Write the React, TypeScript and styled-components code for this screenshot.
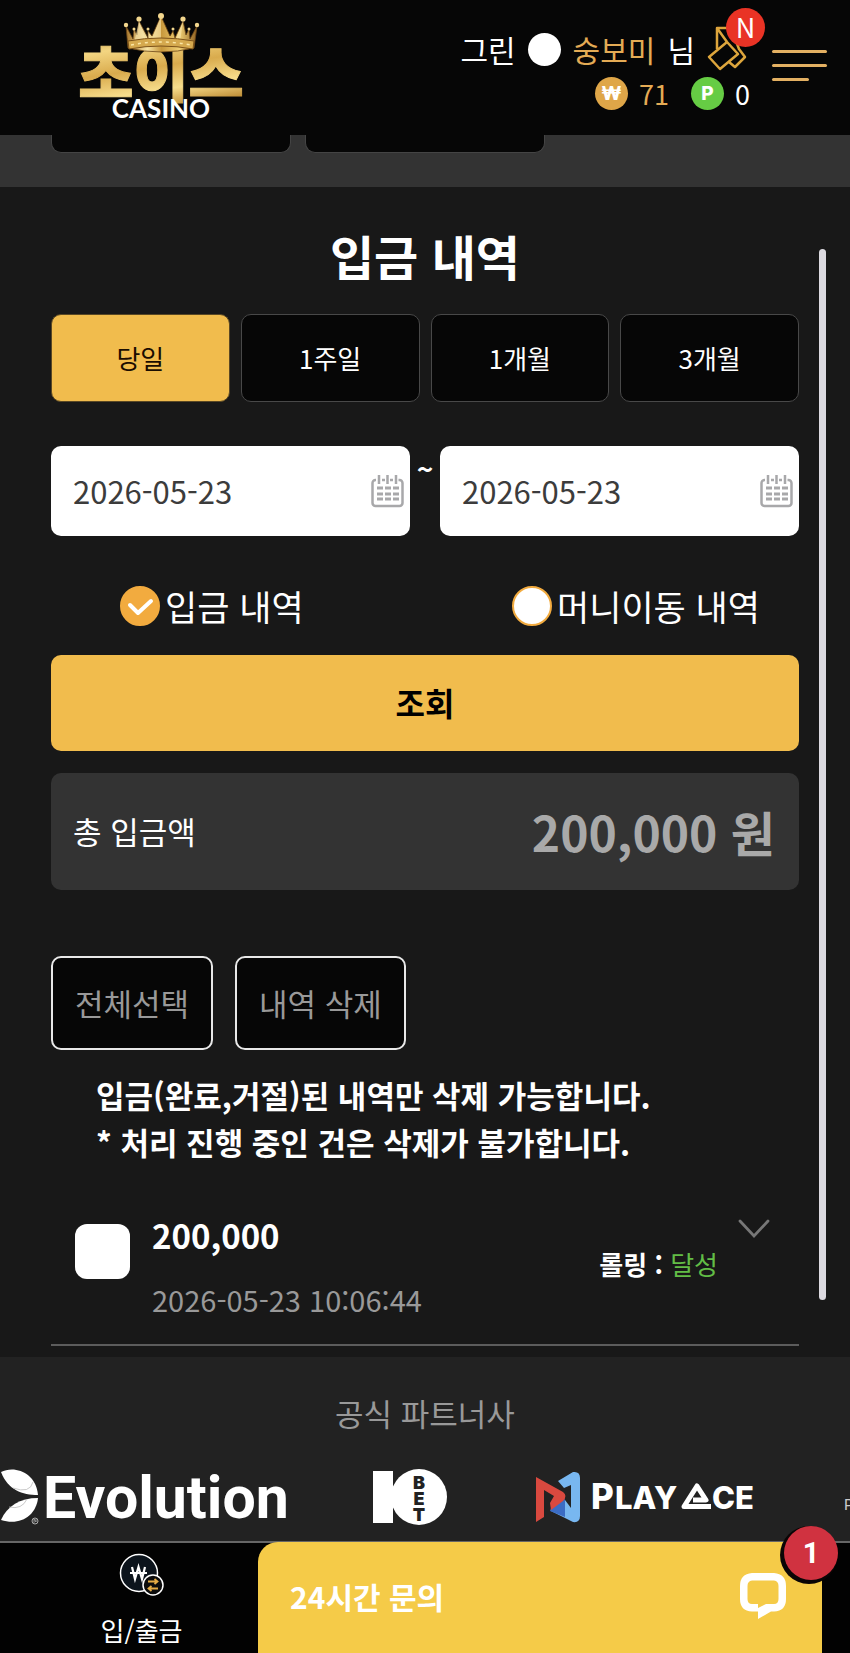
import React, { useState } from "react";
import styled, { createGlobalStyle } from "styled-components";

const GlobalStyle = createGlobalStyle`
  * { box-sizing: border-box; }
  body {
    margin: 0;
    background: #181818;
    color: #fff;
    font-family: "Noto Sans CJK KR", "Noto Sans", sans-serif;
  }
  button, input { font-family: inherit; }
`;

const Page = styled.div`
  display: flex;
  flex-direction: column;
  overflow: hidden;
`;

const Header = styled.header`
  display: flex;
  align-items: flex-start;
  height: 135px;
  padding: 0 23px 0 78px;
  background: #060606;
`;

const LogoLink = styled.a`
  display: block;
  margin-top: 12px;
  margin-right: auto;
  line-height: 0;
`;

const UserBox = styled.div`
  display: flex;
  flex-direction: column;
  align-items: flex-end;
  gap: 5px;
  padding-top: 26px;
  font-size: 30px;
  line-height: 45px;
`;

const UserLine = styled.div`
  display: flex;
  align-items: center;
  gap: 12px;
`;

const Gold = styled.span`
  color: #e4ab55;
`;

const LevelDot = styled.span`
  width: 33px;
  height: 33px;
  border-radius: 50%;
  background: #fff;
`;

const TicketLink = styled.a`
  position: relative;
  display: block;
  width: 40px;
  height: 46px;
  margin-right: 3px;
`;

const NewBadge = styled.span`
  position: absolute;
  top: -18px;
  right: -18px;
  width: 39px;
  height: 39px;
  border-radius: 50%;
  background: #e93325;
  color: #fff;
  font-size: 27px;
  line-height: 37px;
  text-align: center;
`;

const Balances = styled.div`
  display: flex;
  align-items: center;
  gap: 22px;
  font-size: 27px;
  line-height: 33px;
`;

const Balance = styled.span<{ $color: string }>`
  display: flex;
  align-items: center;
  gap: 11px;
  color: ${(p) => p.$color};
`;

const Coin = styled.span<{ $color: string }>`
  width: 33px;
  height: 33px;
  border-radius: 50%;
  background: ${(p) => p.$color};
  color: #fff;
  font-family: Inter, sans-serif;
  font-size: 19px;
  font-weight: 800;
  line-height: 33px;
  text-align: center;
`;

const MenuButton = styled.button`
  display: flex;
  flex-direction: column;
  gap: 11px;
  width: 55px;
  margin: 50px 0 0 22px;
  padding: 0;
  border: 0;
  background: none;
`;

const MenuBar = styled.span<{ $short?: boolean }>`
  width: ${(p) => (p.$short ? "37px" : "100%")};
  height: 3px;
  border-radius: 2px;
  background: #e3b062;
`;

const Strip = styled.div`
  display: grid;
  grid-template-columns: repeat(3, 1fr);
  gap: 14px;
  height: 52px;
  padding: 0 51px;
  background: #333;
`;

const StripCard = styled.div`
  height: 18px;
  border: 1px solid #444;
  border-top: 0;
  border-radius: 0 0 10px 10px;
  background: #060606;
`;

const Main = styled.main`
  position: relative;
  padding: 40px 51px 11px;
  background: #181818;
`;

const ScrollThumb = styled.div`
  position: absolute;
  top: 62px;
  right: 24px;
  bottom: 57px;
  width: 7px;
  border-radius: 4px;
  background: #dcdae0;
`;

const Title = styled.h1`
  margin: 0 0 31px;
  font-size: 48px;
  font-weight: 700;
  line-height: 56px;
  text-align: center;
`;

const Periods = styled.div`
  display: grid;
  grid-template-columns: repeat(4, 1fr);
  gap: 11px;
  margin-bottom: 44px;
`;

const PeriodButton = styled.button<{ $active: boolean }>`
  height: 88px;
  padding: 0 0 2px;
  border: 1px solid ${(p) => (p.$active ? "#5a4824" : "#484848")};
  border-radius: 10px;
  background: ${(p) => (p.$active ? "#f1bc4d" : "#060606")};
  color: ${(p) => (p.$active ? "#1a0d00" : "#fff")};
  font-size: 26px;
`;

const DateRange = styled.div`
  display: flex;
  margin-bottom: 50px;
`;

const DateField = styled.label`
  display: flex;
  flex: 1;
  align-items: center;
  min-width: 0;
  height: 90px;
  padding: 0 6px 0 22px;
  border-radius: 10px;
  background: #fff;
`;

const DateInput = styled.input`
  flex: 1;
  min-width: 0;
  padding: 0;
  border: 0;
  outline: 0;
  background: none;
  color: #3c3c3c;
  font-size: 31px;
  line-height: 46px;
`;

const Tilde = styled.span`
  width: 30px;
  padding-top: 2px;
  font-size: 28px;
  font-weight: 700;
  line-height: 40px;
  text-align: center;
`;

const Kinds = styled.div`
  display: flex;
  justify-content: space-between;
  margin-bottom: 29px;
  padding: 0 39px 0 69px;
`;

const KindLabel = styled.label`
  display: flex;
  align-items: center;
  gap: 5px;
  height: 40px;
  font-size: 35px;
  line-height: 40px;
`;

const KindRadio = styled.input`
  appearance: none;
  width: 40px;
  height: 40px;
  margin: 0;
  border: 2px solid #f2ab3f;
  border-radius: 50%;
  background: #fff;
  &:checked {
    background: #f2ab3f
      url("data:image/svg+xml,%3Csvg xmlns='http://www.w3.org/2000/svg' viewBox='0 0 36 36'%3E%3Cpath d='M8 17l8 8 13-12' fill='none' stroke='white' stroke-width='4' stroke-linecap='round' stroke-linejoin='round'/%3E%3C/svg%3E")
      center / 36px 36px no-repeat;
  }
`;

const SearchButton = styled.button`
  display: block;
  width: 100%;
  height: 96px;
  margin-bottom: 22px;
  padding: 0 0 2px;
  border: 0;
  border-radius: 10px;
  background: #f1bc4d;
  color: #000;
  font-size: 32px;
  font-weight: 700;
`;

const Total = styled.div`
  display: flex;
  align-items: center;
  justify-content: space-between;
  height: 117px;
  margin-bottom: 66px;
  padding: 0 24px 2px 22px;
  border-radius: 10px;
  background: #333;
  font-size: 31px;
`;

const TotalAmount = styled.strong`
  color: #a9a9a9;
  font-size: 48px;
`;

const Actions = styled.div`
  display: flex;
  gap: 22px;
  margin-bottom: 21px;
`;

const ActionButton = styled.button`
  height: 94px;
  padding: 0 22px 2px;
  border: 2px solid #e8e8e8;
  border-radius: 10px;
  background: #060606;
  color: #999;
  font-size: 31px;
`;

const Notice = styled.p`
  margin: 0;
  padding-left: 45px;
  font-size: 31px;
  font-weight: 700;
  line-height: 47px;
`;

const Record = styled.div`
  display: flex;
  align-items: flex-start;
  padding: 46px 29px 25px 24px;
  border-bottom: 2px solid #5c5c5c;
`;

const RecordCheck = styled.input`
  appearance: none;
  width: 55px;
  height: 55px;
  margin: 13px 22px 0 0;
  border-radius: 12px;
  background: #fff;
`;

const RecordInfo = styled.div`
  display: flex;
  flex: 1;
  flex-direction: column;
  gap: 20px;
`;

const RecordAmount = styled.strong`
  font-size: 33px;
  line-height: 48px;
`;

const RecordTime = styled.time`
  color: #999;
  font-size: 29px;
  line-height: 40px;
`;

const Rolling = styled.span`
  margin: 33px 20px 0 0;
  font-size: 26px;
  font-weight: 700;
  line-height: 40px;
`;

const RollingState = styled.span`
  color: #62bd46;
  font-weight: 400;
`;

const ExpandButton = styled.button`
  margin-top: 8px;
  padding: 0;
  border: 0;
  background: none;
  line-height: 0;
`;

const Partners = styled.section`
  padding: 36px 0 15px;
  background: #222;
`;

const PartnersTitle = styled.h2`
  margin: 0 0 35px;
  color: #999;
  font-size: 31px;
  font-weight: 400;
  line-height: 40px;
  text-align: center;
`;

const PartnerRow = styled.div`
  display: flex;
  gap: 86px;
  overflow: hidden;
  height: 58px;
  svg { flex-shrink: 0; }
`;

const BottomBar = styled.footer`
  display: flex;
  height: 112px;
  padding-right: 28px;
  border-top: 2px solid #666;
  background: #020202;
`;

const NavLink = styled.a`
  display: flex;
  flex-direction: column;
  align-items: center;
  gap: 17px;
  width: 258px;
  padding: 10px 0 0 25px;
  color: #fff;
  font-size: 26px;
  line-height: 32px;
  text-decoration: none;
`;

const ChatButton = styled.button`
  position: relative;
  display: flex;
  flex: 1;
  align-items: center;
  justify-content: space-between;
  margin-top: -1px;
  padding: 0 36px 4px 32px;
  border: 0;
  border-radius: 20px 0 0 0;
  background: #f5cb48;
  color: #fff;
  font-size: 30px;
  font-weight: 700;
  line-height: 40px;
`;

const ChatBadge = styled.span`
  position: absolute;
  top: -16px;
  right: -16px;
  width: 54px;
  height: 54px;
  border-radius: 50%;
  background: #d03240;
  box-shadow: -2px 2px 0 2px #0a0505;
  font-family: Roboto, sans-serif;
  font-size: 29px;
  line-height: 54px;
  text-align: center;
`;

const CasinoLogo = () => (
  <svg width="172" height="112" viewBox="0 0 172 112" role="img" aria-label="초이스 CASINO">
    <defs>
      <linearGradient id="gold" x1="0" y1="0" x2="0.3" y2="1">
        <stop offset="0" stopColor="#b98a34" />
        <stop offset="0.3" stopColor="#f3d581" />
        <stop offset="0.55" stopColor="#d9ab4d" />
        <stop offset="0.8" stopColor="#f7dd8c" />
        <stop offset="1" stopColor="#c08f38" />
      </linearGradient>
      <linearGradient id="crown" x1="0" y1="0" x2="1" y2="0">
        <stop offset="0" stopColor="#a9782c" />
        <stop offset="0.3" stopColor="#f8e4a4" />
        <stop offset="0.5" stopColor="#c8983c" />
        <stop offset="0.75" stopColor="#f0cf74" />
        <stop offset="1" stopColor="#8f6020" />
      </linearGradient>
    </defs>
    <text x="83" y="85" fontSize="60" fontWeight="900" fill="url(#gold)" stroke="url(#gold)" strokeWidth="1" textAnchor="middle">초이스</text>
    <g transform="translate(2 0)">
      <path d="M48 36 L46 14 L53 27 L54 17 L57 23 L59 9 L68 26 L68 19 L72 24 L81 4 L90 24 L93 19 L95 26 L103 9 L106 23 L109 17 L110 27 L117 14 L114 36 Q81 44 48 36Z" fill="url(#crown)" stroke="#6b4516" strokeWidth="0.8" />
      <path d="M59 9 L67 30 L54 31Z M81 4 L81 30 L71 29Z M103 9 L100 30 L95 29Z" fill="#fbe9b0" opacity="0.6" />
      <path d="M48 29 Q81 23 114 29 L113 37 Q81 31 49 37Z" fill="#d5a94e" stroke="#7c5219" strokeWidth="1" />
      <path d="M51 33 Q81 27 111 33" fill="none" stroke="#fbe7a6" strokeWidth="1.5" strokeDasharray="3 4" />
      <g fill="#f3d78e">
        <circle cx="46" cy="13" r="2.2" />
        <circle cx="59" cy="7" r="2.6" />
        <circle cx="81" cy="4" r="3" />
        <circle cx="103" cy="7" r="2.6" />
        <circle cx="117" cy="13" r="2.2" />
        <circle cx="54" cy="17" r="1.5" />
        <circle cx="68" cy="17" r="1.5" />
        <circle cx="93" cy="17" r="1.5" />
        <circle cx="109" cy="17" r="1.5" />
      </g>
    </g>
    <text x="83" y="106" fontFamily="Lato, sans-serif" fontSize="26" fontWeight="700" fill="#fff" textAnchor="middle">CASINO</text>
  </svg>
);

const TicketIcon = () => (
  <svg width="40" height="46" viewBox="0 0 40 46" fill="none" stroke="#dda53c" strokeWidth="2.500" strokeLinejoin="round" aria-hidden="true">
    <path d="M10 23V2H24L32 23L38 31L28 41L22 36M10 2L20 16" />
    <path d="M2 31L20 16L31 28L13 43Z" />
  </svg>
);

const CalendarIcon = () => (
  <svg width="33" height="34" viewBox="0 0 33 34" fill="none" stroke="#a8a8aa" strokeWidth="2.500" aria-hidden="true">
    <path d="M5 6H4.500a3 3 0 0 0-3 3V29a3 3 0 0 0 3 3H28.500a3 3 0 0 0 3-3V9a3 3 0 0 0-3-3h-1M11 6h3M19 6h3" />
    <path d="M8 1v9M16.500 1v9M25 1v9" strokeWidth="2.500" />
    <path d="M6 14h6M14 14h6M22 14h6M6 20h6M14 20h6M22 20h6M6 25h6M14 25h6M22 25h6" strokeWidth="2.800" />
  </svg>
);

const ExpandIcon = () => (
  <svg width="32" height="20" viewBox="0 0 32 20" fill="none" stroke="#777" strokeWidth="2.800" strokeLinecap="round" aria-hidden="true">
    <path d="M2 2L16 17L30 2" />
  </svg>
);

const EvolutionLogo = () => (
  <svg width="287" height="58" viewBox="0 0 287 58" role="img" aria-label="Evolution">
    <path d="M1 4C14-3 36 4 38 27C22 27 8 22 1 4Z" fill="#fff" />
    <path d="M1 52C7 38 20 30 38 30C36 48 20 58 1 52Z" fill="#fff" />
    <path d="M13 20Q30 26 33 14M9 39Q22 42 27 31" fill="none" stroke="#bbb" strokeWidth="0.8" />
    <circle cx="35" cy="53" r="3" fill="none" stroke="#aaa" strokeWidth="1" />
    <path d="M34 55v-4l2 3v-3" fill="none" stroke="#aaa" strokeWidth="0.8" />
    <text x="43" y="50" fontFamily="Roboto, sans-serif" fontSize="59" fontWeight="700" fill="#fff">Evolution</text>
  </svg>
);

const TenBetLogo = () => (
  <svg width="75" height="58" viewBox="0 0 75 58" role="img" aria-label="10BET">
    <path d="M0 3H20V55H0Z" fill="#fff" />
    <circle cx="46" cy="29" r="28" fill="#fff" />
    <g fontFamily="Inter, sans-serif" fontSize="18" fontWeight="900" fill="#222" textAnchor="middle">
      <text x="46" y="21">B</text>
      <text x="46" y="37">E</text>
      <text x="46" y="53">T</text>
    </g>
  </svg>
);

const PlayAceLogo = () => (
  <svg width="224" height="58" viewBox="0 0 224 58" role="img" aria-label="PlayAce">
    <path d="M24 13L39 4Q46 3 46 10V48Q46 55 39 54L17 43L31 32L37 40V17L30 20Z" fill="#78b7f0" />
    <path d="M17 40L31 31V49L16 43Z" fill="#3b6cc4" />
    <path d="M2 9L29 24Q34 28 29 33L17 42L16 35L20 28L10 22V49L2 54Z" fill="#d9493f" />
    <g fontFamily="Inter, sans-serif" fontWeight="800" fill="#fff">
      <text x="57" y="41" fontSize="35">P</text>
      <text x="81" y="41" fontSize="31">LAY</text>
      <text x="178" y="41" fontSize="31">CE</text>
    </g>
    <path d="M177 38.500H150L163 18L172 32H159" fill="none" stroke="#fff" strokeWidth="5" strokeLinejoin="round" />
  </svg>
);

const PartialLogo = () => (
  <svg width="90" height="58" viewBox="0 0 90 58" role="img" aria-label="P">
    <text x="0" y="42" fontFamily="Roboto, sans-serif" fontSize="15" fill="#ccc">P</text>
  </svg>
);

const ExchangeIcon = () => (
  <svg width="46" height="44" viewBox="0 0 46 44" fill="none" aria-hidden="true">
    <circle cx="20" cy="20" r="18.500" fill="#0c141c" stroke="#fff" strokeWidth="1.500" />
    <path d="M13 14L16 26L19.500 14L23 26L26 14M11 20H28" stroke="#fff" strokeWidth="2.200" />
    <circle cx="34" cy="32" r="10" fill="#0c0c0c" stroke="#fff" strokeWidth="1.500" />
    <path d="M29 28.500H38M35.500 26L38.500 28.500L35.500 31M39 35.500H30M32.500 33L29.500 35.500L32.500 38" stroke="#e4ab45" strokeWidth="1.800" />
  </svg>
);

const ChatIcon = () => (
  <svg width="46" height="46" viewBox="0 0 46 46" fill="none" aria-hidden="true">
    <path fillRule="evenodd" fill="#fff" d="M12 0H34Q46 1 46 13V26Q46 38 34 38.500H31L18 46V38.500H12Q0 38 0 26V13Q0 1 12 0ZM12 7.500Q7.500 8 7.500 13V26Q7.500 31 12 31H18V35L26 31H34Q38.500 31 38.500 26V13Q38.500 8 34 7.500Z" />
  </svg>
);

const periods = ["당일", "1주일", "1개월", "3개월"];
const kinds = ["입금 내역", "머니이동 내역"];

export default function App() {
  const [period, setPeriod] = useState(periods[0]);
  const [kind, setKind] = useState(kinds[0]);

  return (
    <Page lang="ko">
      <GlobalStyle />
      <Header>
        <LogoLink href="#home">
          <CasinoLogo />
        </LogoLink>
        <UserBox>
          <UserLine>
            <span>그린</span>
            <LevelDot />
            <Gold>숭보미</Gold>
            <span>님</span>
            <TicketLink href="#coupons" aria-label="쿠폰">
              <TicketIcon />
              <NewBadge>N</NewBadge>
            </TicketLink>
          </UserLine>
          <Balances>
            <Balance $color="#e4ab55">
              <Coin $color="#dfa648">₩</Coin>71
            </Balance>
            <Balance $color="#fff">
              <Coin $color="#66cc44">P</Coin>0
            </Balance>
          </Balances>
        </UserBox>
        <MenuButton aria-label="메뉴">
          <MenuBar />
          <MenuBar />
          <MenuBar $short />
        </MenuButton>
      </Header>

      <Strip>
        <StripCard />
        <StripCard />
      </Strip>

      <Main>
        <ScrollThumb />
        <Title>입금 내역</Title>
        <Periods>
          {periods.map((name) => (
            <PeriodButton key={name} $active={name === period} onClick={() => setPeriod(name)}>
              {name}
            </PeriodButton>
          ))}
        </Periods>
        <DateRange>
          <DateField>
            <DateInput aria-label="시작일" defaultValue="2026-05-23" />
            <CalendarIcon />
          </DateField>
          <Tilde>~</Tilde>
          <DateField>
            <DateInput aria-label="종료일" defaultValue="2026-05-23" />
            <CalendarIcon />
          </DateField>
        </DateRange>
        <Kinds>
          {kinds.map((name) => (
            <KindLabel key={name}>
              <KindRadio type="radio" name="kind" checked={name === kind} onChange={() => setKind(name)} />
              {name}
            </KindLabel>
          ))}
        </Kinds>
        <SearchButton>조회</SearchButton>
        <Total>
          <span>총 입금액</span>
          <TotalAmount>200,000 원</TotalAmount>
        </Total>
        <Actions>
          <ActionButton>전체선택</ActionButton>
          <ActionButton>내역 삭제</ActionButton>
        </Actions>
        <Notice>
          입금(완료,거절)된 내역만 삭제 가능합니다.
          <br />* 처리 진행 중인 건은 삭제가 불가합니다.
        </Notice>
        <Record>
          <RecordCheck type="checkbox" aria-label="200,000 선택" />
          <RecordInfo>
            <RecordAmount>200,000</RecordAmount>
            <RecordTime>2026-05-23 10:06:44</RecordTime>
          </RecordInfo>
          <Rolling>
            롤링 : <RollingState>달성</RollingState>
          </Rolling>
          <ExpandButton aria-label="상세 보기">
            <ExpandIcon />
          </ExpandButton>
        </Record>
      </Main>

      <Partners>
        <PartnersTitle>공식 파트너사</PartnersTitle>
        <PartnerRow>
          <EvolutionLogo />
          <TenBetLogo />
          <PlayAceLogo />
          <PartialLogo />
        </PartnerRow>
      </Partners>

      <BottomBar>
        <NavLink href="#cash">
          <ExchangeIcon />
          입/출금
        </NavLink>
        <ChatButton>
          24시간 문의
          <ChatIcon />
          <ChatBadge>1</ChatBadge>
        </ChatButton>
      </BottomBar>
    </Page>
  );
}
